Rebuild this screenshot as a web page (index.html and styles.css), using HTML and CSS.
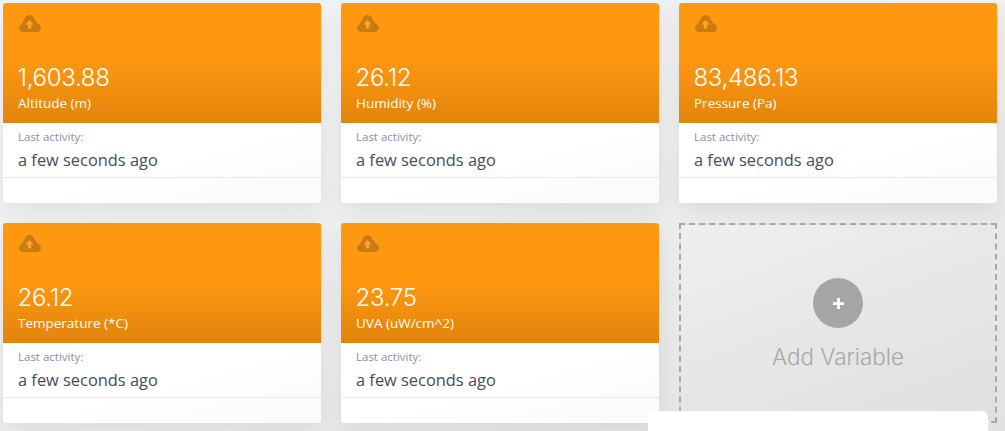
FILE: index.html
```html
<!DOCTYPE html>
<html lang="en">
<head>
<meta charset="utf-8">
<title>Variables</title>
<link rel="stylesheet" href="styles.css">
</head>
<body>
<div class="topstrip"></div>
<main class="grid">
  <article class="card">
    <div class="card-head">
      <svg class="cloud" viewBox="0 0 22 17"><path d="M4.200 17C1.800 17 0 15.200 0 13 0 11 1.300 9.300 3.200 8.900 3.200 7 4.200 5.900 5.300 5.500 5.800 2.300 7.800 0 10.500 0 13.200 0 15.300 2.200 15.800 5.200 16.900 5.300 17.800 6.500 18 8.200 20.300 8.800 22 10.700 22 13 22 15.300 20.200 17 18 17z"/><path class="arrow" d="M10.500 5l4.200 4.500h-2.500v4H8.800v-4H6.300z"/></svg>
      <div class="value">1,603.88</div>
      <div class="name">Altitude (m)</div>
    </div>
    <div class="activity"><div class="label">Last activity:</div><div class="when">a few seconds ago</div></div>
    <div class="foot"></div>
  </article>
  <article class="card">
    <div class="card-head">
      <svg class="cloud" viewBox="0 0 22 17"><path d="M4.200 17C1.800 17 0 15.200 0 13 0 11 1.300 9.300 3.200 8.900 3.200 7 4.200 5.900 5.300 5.500 5.800 2.300 7.800 0 10.500 0 13.200 0 15.300 2.200 15.800 5.200 16.900 5.300 17.800 6.500 18 8.200 20.300 8.800 22 10.700 22 13 22 15.300 20.200 17 18 17z"/><path class="arrow" d="M10.500 5l4.200 4.500h-2.500v4H8.800v-4H6.300z"/></svg>
      <div class="value">26.12</div>
      <div class="name">Humidity (%)</div>
    </div>
    <div class="activity"><div class="label">Last activity:</div><div class="when">a few seconds ago</div></div>
    <div class="foot"></div>
  </article>
  <article class="card">
    <div class="card-head">
      <svg class="cloud" viewBox="0 0 22 17"><path d="M4.200 17C1.800 17 0 15.200 0 13 0 11 1.300 9.300 3.200 8.900 3.200 7 4.200 5.900 5.300 5.500 5.800 2.300 7.800 0 10.500 0 13.200 0 15.300 2.200 15.800 5.200 16.900 5.300 17.800 6.500 18 8.200 20.300 8.800 22 10.700 22 13 22 15.300 20.200 17 18 17z"/><path class="arrow" d="M10.500 5l4.200 4.500h-2.500v4H8.800v-4H6.300z"/></svg>
      <div class="value">83,486.13</div>
      <div class="name">Pressure (Pa)</div>
    </div>
    <div class="activity"><div class="label">Last activity:</div><div class="when">a few seconds ago</div></div>
    <div class="foot"></div>
  </article>
  <article class="card">
    <div class="card-head">
      <svg class="cloud" viewBox="0 0 22 17"><path d="M4.200 17C1.800 17 0 15.200 0 13 0 11 1.300 9.300 3.200 8.900 3.200 7 4.200 5.900 5.300 5.500 5.800 2.300 7.800 0 10.500 0 13.200 0 15.300 2.200 15.800 5.200 16.900 5.300 17.800 6.500 18 8.200 20.300 8.800 22 10.700 22 13 22 15.300 20.200 17 18 17z"/><path class="arrow" d="M10.500 5l4.200 4.500h-2.500v4H8.800v-4H6.300z"/></svg>
      <div class="value">26.12</div>
      <div class="name">Temperature (*C)</div>
    </div>
    <div class="activity"><div class="label">Last activity:</div><div class="when">a few seconds ago</div></div>
    <div class="foot"></div>
  </article>
  <article class="card">
    <div class="card-head">
      <svg class="cloud" viewBox="0 0 22 17"><path d="M4.200 17C1.800 17 0 15.200 0 13 0 11 1.300 9.300 3.200 8.900 3.200 7 4.200 5.900 5.300 5.500 5.800 2.300 7.800 0 10.500 0 13.200 0 15.300 2.200 15.800 5.200 16.900 5.300 17.800 6.500 18 8.200 20.300 8.800 22 10.700 22 13 22 15.300 20.200 17 18 17z"/><path class="arrow" d="M10.500 5l4.200 4.500h-2.500v4H8.800v-4H6.300z"/></svg>
      <div class="value">23.75</div>
      <div class="name">UVA (uW/cm^2)</div>
    </div>
    <div class="activity"><div class="label">Last activity:</div><div class="when">a few seconds ago</div></div>
    <div class="foot"></div>
  </article>
  <article class="add">
    <div class="plus"><svg viewBox="0 0 12 12"><path d="M4.500 0h3v4.500H12v3H7.500V12h-3V7.500H0v-3h4.500z"/></svg></div>
    <div class="add-text">Add Variable</div>
  </article>
</main>
<div class="panel"></div>
</body>
</html>
```
FILE: styles.css
```css
* { box-sizing: border-box; }
html, body { margin: 0; height: 431px; overflow: hidden; }
body {
  position: relative;
  padding: 3px 8px 0 3px;
  background: linear-gradient(160deg, #f6f6f6 0%, #efefef 50%, #e1e2e2 100%);
  font-family: "Open Sans", sans-serif;
}
.topstrip {
  position: absolute;
  left: 0; top: 0;
  width: 100%; height: 3px;
  background: linear-gradient(90deg, #eaf5fc 0, #e6f3fc 60px, #e6f3fc 890px, #f0f1f2 891px);
}
.grid {
  display: grid;
  grid-template-columns: repeat(3, 318px);
  grid-auto-rows: 200px;
  gap: 20px;
}
.card {
  display: flex;
  flex-direction: column;
  background: linear-gradient(165deg, #fff 70%, #fafafa);
  border-radius: 3px;
  box-shadow: 0 8px 24px rgba(0, 0, 0, 0.08);
  overflow: hidden;
}
.card-head {
  height: 120px;
  padding: 12px 15px 0;
  display: flex;
  flex-direction: column;
  align-items: flex-start;
  color: #fff;
  background: linear-gradient(180deg, #ff9811 0%, #ff9811 45%, #e2850c 100%);
}
.cloud {
  display: block;
  width: 22px;
  height: 17px;
  margin-left: 1px;
  fill: #c97a10;
}
.cloud .arrow { fill: #ffa42a; }
.value {
  margin: 31px 0 0 -0.500px;
  font: 300 24px/30px Inter, sans-serif;
  letter-spacing: -0.3px;
}
.name {
  margin-top: 1px;
  font: 400 13.500px/18px "Open Sans", sans-serif;
}
.activity {
  height: 55px;
  padding: 6px 15px 0;
  border-bottom: 1px solid #e9e9e9;
}
.label {
  font-size: 11.500px;
  line-height: 16px;
  color: #8f8f96;
}
.when {
  margin-top: 4px;
  font-size: 16.400px;
  line-height: 22px;
  color: #4a4c55;
}
.foot { flex: 1; }
.add {
  display: flex;
  flex-direction: column;
  align-items: center;
  padding-top: 53px;
  border: 2px dashed #a8a8a8;
  background: linear-gradient(160deg, #eeefef 0%, #dedfdf 100%);
}
.plus {
  width: 50px;
  height: 50px;
  border-radius: 50%;
  display: flex;
  align-items: center;
  justify-content: center;
  background: #a5a5a5;
}
.plus svg { width: 11px; height: 11px; fill: #fff; }
.add-text {
  margin-top: 16px;
  font: 300 22.400px/26px Inter, sans-serif;
  color: #a8a8aa;
}
.panel {
  position: absolute;
  left: 648px;
  top: 411px;
  width: 340px;
  height: 40px;
  background: #fff;
  border-radius: 6px 6px 0 0;
}
```
